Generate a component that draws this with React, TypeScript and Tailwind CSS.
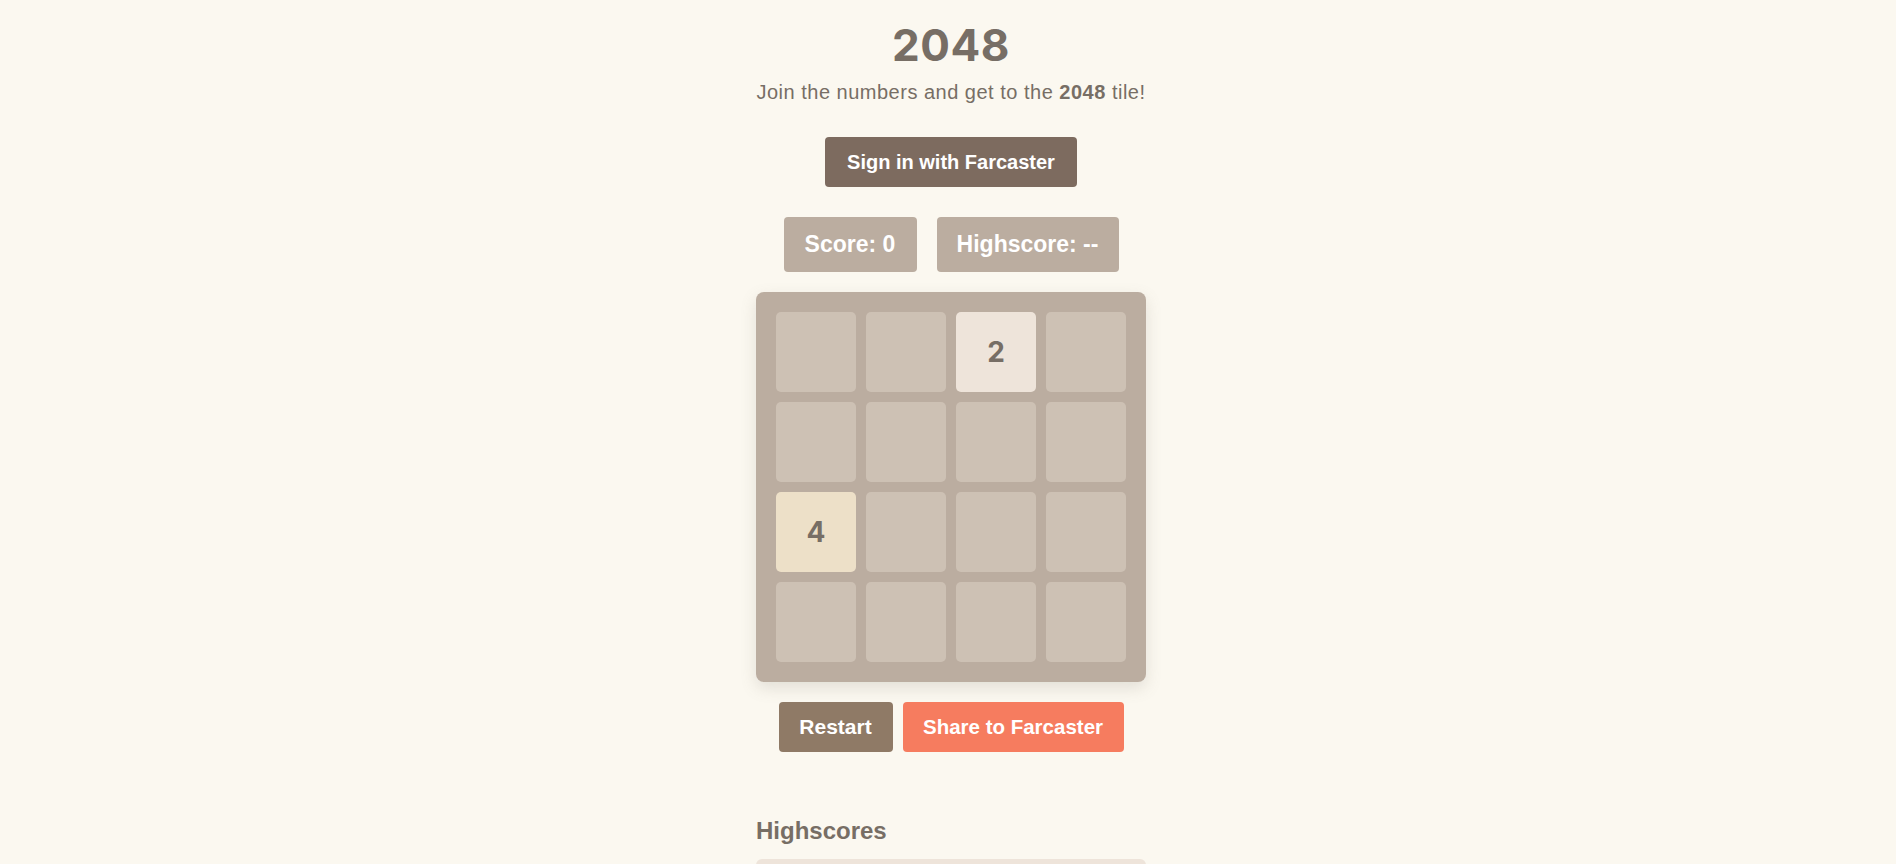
import React from "react";

const board: number[][] = [
  [0, 0, 2, 0],
  [0, 0, 0, 0],
  [4, 0, 0, 0],
  [0, 0, 0, 0],
];

const tileColors: Record<number, string> = {
  0: "bg-[#cdc1b4]",
  2: "bg-[#eee4da]",
  4: "bg-[#ede0c8]",
};

export default function App() {
  return (
    <div className="min-h-screen bg-[#fbf8f0] text-[#776e65] font-['Liberation_Sans',Arial,sans-serif]">
      <div className="flex flex-col items-center pt-[22px] pl-[6px]">
        <h1 className="text-[44px] leading-[46px] font-bold font-['Inter',sans-serif] tracking-[0.5px]">2048</h1>
        <p className="mt-[14px] text-[20px] leading-[20px] tracking-[0.5px]">
          Join the numbers and get to the <strong className="font-bold">2048</strong> tile!
        </p>

        <button className="mt-[35px] h-[50px] px-[22px] rounded-[4px] bg-[#7d6b5f] text-white text-[20px] font-bold">
          Sign in with Farcaster
        </button>

        <div className="mt-[30px] flex gap-[20px]">
          <div className="h-[55px] w-[133px] rounded-[4px] bg-[#bbada0] text-white text-[23px] font-bold flex items-center justify-center">
            Score: 0
          </div>
          <div className="h-[55px] w-[182px] rounded-[4px] bg-[#bbada0] text-white text-[23px] font-bold flex items-center justify-center">
            Highscore: --
          </div>
        </div>

        <div className="mt-[20px] w-[390px] p-[20px] rounded-[8px] bg-[#bbada0] shadow-[0_6px_16px_rgba(119,110,101,0.18)] grid grid-cols-4 gap-[10px]">
          {board.flat().map((v, i) => (
            <div
              key={i}
              className={`h-[80px] rounded-[5px] flex items-center justify-center text-[28px] font-bold font-['Inter',sans-serif] ${tileColors[v]}`}
            >
              {v > 0 ? v : ""}
            </div>
          ))}
        </div>

        <div className="mt-[20px] flex gap-[10px]">
          <button className="h-[50px] w-[114px] rounded-[4px] bg-[#8f7a66] text-white text-[21px] font-bold">
            Restart
          </button>
          <button className="h-[50px] w-[221px] rounded-[4px] bg-[#f67c5f] text-white text-[20.5px] font-bold">
            Share to Farcaster
          </button>
        </div>

        <div className="mt-[67px] w-[390px]">
          <h2 className="text-[24px] leading-[24px] font-bold">Highscores</h2>
          <div className="mt-[16px] h-[120px] rounded-[6px] bg-[#eee4da]" />
        </div>
      </div>
    </div>
  );
}
